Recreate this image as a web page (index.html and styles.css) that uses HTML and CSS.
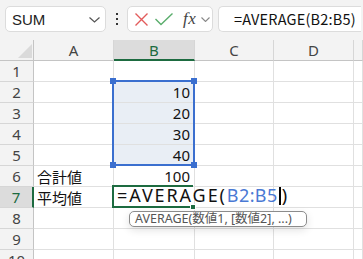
FILE: index.html
```html
<!DOCTYPE html>
<html lang="ja">
<head>
<meta charset="utf-8">
<link rel="stylesheet" href="styles.css">
</head>
<body>
<div class="app">
  <div class="toolbar">
    <div class="namebox">
      <span class="name">SUM</span>
      <svg class="chev" width="11" height="6" viewBox="0 0 11 6"><path d="M0.5 0.5 L5.5 5 L10.5 0.5" fill="none" stroke="#555" stroke-width="1.2"/></svg>
    </div>
    <div class="dots"><i></i><i></i><i></i></div>
    <div class="fbuttons">
      <svg width="13" height="13" viewBox="0 0 13 13"><path d="M0.5 0.5 L12.5 12.5 M12.5 0.5 L0.5 12.5" stroke="#e25b5b" stroke-width="1.4" fill="none"/></svg>
      <svg width="18" height="13" viewBox="0 0 18 13"><path d="M0.5 6 L6 11.5 L17.5 0.5" stroke="#5aad6c" stroke-width="1.4" fill="none"/></svg>
      <span class="fx">fx</span>
      <svg class="chev2" width="9" height="5" viewBox="0 0 9 5"><path d="M0.5 0.5 L4.5 4.5 L8.5 0.5" fill="none" stroke="#888" stroke-width="1.1"/></svg>
    </div>
    <div class="fbar">=AVERAGE(B2:B5)</div>
  </div>
  <div class="sheet">
    <div class="grid">
      <div class="corner"><span class="tri"></span></div>
      <div class="ch">A</div><div class="ch sel">B</div><div class="ch">C</div><div class="ch">D</div><div class="ch"></div>

      <div class="rh">1</div><div class="c"></div><div class="c"></div><div class="c"></div><div class="c"></div><div class="c"></div>
      <div class="rh">2</div><div class="c"></div><div class="c num hl">10</div><div class="c"></div><div class="c"></div><div class="c"></div>
      <div class="rh">3</div><div class="c"></div><div class="c num hl">20</div><div class="c"></div><div class="c"></div><div class="c"></div>
      <div class="rh">4</div><div class="c"></div><div class="c num hl">30</div><div class="c"></div><div class="c"></div><div class="c"></div>
      <div class="rh">5</div><div class="c"></div><div class="c num hl">40</div><div class="c"></div><div class="c"></div><div class="c"></div>
      <div class="rh">6</div><div class="c lbl">合計値</div><div class="c num">100</div><div class="c"></div><div class="c"></div><div class="c"></div>
      <div class="rh sel">7</div><div class="c lbl">平均値</div><div class="c"></div><div class="c"></div><div class="c"></div><div class="c"></div>
      <div class="rh">8</div><div class="c"></div><div class="c"></div><div class="c"></div><div class="c"></div><div class="c"></div>
      <div class="rh">9</div><div class="c"></div><div class="c"></div><div class="c"></div><div class="c"></div><div class="c"></div>
      <div class="rh">10</div><div class="c"></div><div class="c"></div><div class="c"></div><div class="c"></div><div class="c"></div>
    </div>

    <div class="range">
      <i class="h tl"></i><i class="h tr"></i><i class="h bl"></i><i class="h br"></i>
    </div>
    <div class="active">
      <span class="edit"><span class="fn">=AVERAGE(</span><span class="ref">B2:B5</span><span class="caret"></span>)</span>
      <i class="fill"></i>
    </div>
    <div class="tip">AVERAGE(数値1, [数値2], ...)</div>
  </div>
</div>
</body>
</html>
```
FILE: styles.css
```css
* { box-sizing: border-box; }
html, body { margin: 0; padding: 0; background: #fff; }
body {
  font-family: "Noto Sans", "Noto Sans CJK JP", sans-serif;
  width: 363px; height: 259px; overflow: hidden;
}
.app { width: 363px; height: 259px; overflow: hidden; }

.toolbar {
  height: 40px;
  background: #f3f3f3;
  display: flex;
  align-items: flex-start;
  padding: 6px 0 0 5px;
}
.namebox {
  width: 101px; height: 26px;
  background: #fff;
  border: 1px solid #dcdcdc;
  border-radius: 5px;
  display: flex; align-items: center; justify-content: space-between;
  padding: 0 5px 0 6px;
}
.name { font-family: "Liberation Sans", sans-serif; font-size: 15px; color: #222; }
.chev { margin-top: 1px; }
.dots {
  width: 21px; height: 26px;
  display: flex; flex-direction: column; align-items: center; justify-content: center; gap: 3px;
}
.dots i { display: block; width: 2px; height: 2px; background: #333; }
.fbuttons {
  width: 86px; height: 26px;
  background: #fff;
  border: 1px solid #dcdcdc;
  border-radius: 5px;
  display: flex; align-items: center;
  padding-left: 7px; gap: 0;
}
.fbuttons svg:nth-child(2) { margin-left: 7px; }
.fx {
  font-family: "Liberation Serif", serif; font-style: italic;
  font-size: 17px; color: #444; margin-left: 10px; letter-spacing: 0.5px;
  line-height: 20px;
}
.chev2 { margin-left: 5px; }
.fbar {
  margin-left: 5px;
  width: 143px; height: 26px;
  background: #fff;
  border: 1px solid #dcdcdc;
  border-radius: 5px 0 0 5px;
  border-right: none;
  padding-left: 15px;
  font-family: "Noto Sans CJK JP", sans-serif;
  font-size: 14.5px; line-height: 24px; color: #111;
  letter-spacing: 0.2px;
  white-space: nowrap; overflow: hidden;
}

.sheet { position: relative; }
.grid {
  display: grid;
  grid-template-columns: 34px 80px 81px 79px 80px 1fr;
  grid-auto-rows: 21px;
}
.corner, .ch, .rh {
  background: #f3f3f3;
  color: #444;
  font-family: "Noto Sans", sans-serif;
  font-size: 15px;
  display: flex; align-items: center; justify-content: center;
}
.corner { border-right: 1px solid #c4c4c4; border-bottom: 1px solid #c4c4c4; position: relative; }
.tri {
  position: absolute; right: 1px; bottom: 2px;
  width: 0; height: 0;
  border-left: 14px solid transparent;
  border-bottom: 14px solid #dadada;
}
.ch { border-right: 1px solid #d6d6d6; border-bottom: 1px solid #c4c4c4; line-height: 20px; }
.ch.sel {
  background: #dcdcdc;
  color: #1d6b40;
  border-bottom: 2px solid #1d6b40;
}
.rh { border-right: 1px solid #c4c4c4; border-bottom: 1px solid #d6d6d6; }
.rh.sel {
  background: #dcdcdc;
  color: #1d6b40;
  border-right: 2px solid #1d6b40;
}
.c {
  border-right: 1px solid #e0e0e0;
  border-bottom: 1px solid #e0e0e0;
  font-size: 15px; color: #111;
  display: flex; align-items: center;
  white-space: nowrap;
}
.c.hl { background: #e9eef5; }
.num { justify-content: flex-end; padding-right: 4px; }
.lbl { padding-left: 3px; font-family: "Noto Sans CJK JP", sans-serif; font-size: 15px; }

.range {
  position: absolute;
  left: 112px; top: 40px;
  width: 83px; height: 86px;
  border: 2px solid #3b6fcf;
}
.range .h {
  position: absolute; width: 6px; height: 6px; background: #3b6fcf;
}
.range .tl { left: -4px; top: -4px; }
.range .tr { right: -4px; top: -4px; }
.range .bl { left: -4px; bottom: -4px; }
.range .br { right: -4px; bottom: -4px; }

.active {
  position: absolute;
  left: 112px; top: 145px;
  width: 81px; height: 23px;
  border: 2px solid #1d6b40;
  border-right: none;
}
.edit {
  position: absolute; left: 3px; top: -4px;
  font-family: "Noto Sans", sans-serif;
  font-size: 18px; color: #111; white-space: nowrap;
}
.fn { letter-spacing: 1.9px; }
.ref { color: #4a79d4; letter-spacing: 0.4px; }
.caret {
  display: inline-block; width: 2px; height: 18px; background: #000;
  vertical-align: -3px; margin: 0 1px 0 1px;
}
.fill {
  position: absolute; right: -3px; bottom: -4px;
  width: 6px; height: 6px; background: #1d6b40; border: 1px solid #fff;
}
.tip {
  position: absolute;
  left: 129px; top: 171px;
  width: 178px; height: 16px;
  background: #fff;
  border: 1px solid #8c8c8c;
  border-radius: 5px;
  box-shadow: 0 3px 8px rgba(0,0,0,0.12);
  font-family: "Noto Sans", "Noto Sans CJK JP", sans-serif;
  font-size: 12.5px; line-height: 14px; color: #555;
  padding-left: 5px;
  white-space: nowrap;
}
```
